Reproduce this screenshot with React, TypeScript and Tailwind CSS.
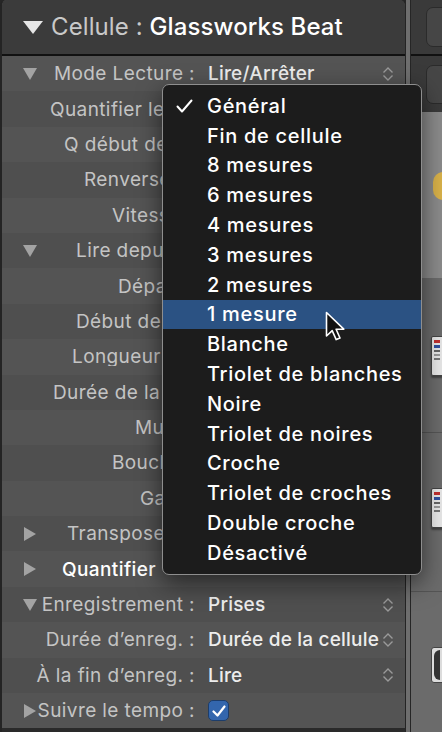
import React from "react";

type Row = {
  label: string;
  tri?: "down" | "right";
  value?: string;
  chev?: boolean;
  check?: boolean;
  pad?: string; // left-aligned label for rows hidden under the menu
  white?: boolean;
};

const rows: Row[] = [
  { label: "Mode Lecture :", tri: "down", value: "Lire/Arrêter", chev: true },
  { label: "Quantifier le début", pad: "pl-[27px]" },
  { label: "Q début de boucle", pad: "pl-[41px]" },
  { label: "Renverser", pad: "pl-[61px]" },
  { label: "Vitesse", pad: "pl-[89px]" },
  { label: "Lire depuis", tri: "down", pad: "pl-[39px]" },
  { label: "Départ", pad: "pl-[95px]" },
  { label: "Début de boucle", pad: "pl-[53px]" },
  { label: "Longueur boucle", pad: "pl-[49px]" },
  { label: "Durée de la cellule", pad: "pl-[30px]" },
  { label: "Muet", pad: "pl-[112px]" },
  { label: "Boucle", pad: "pl-[89px]" },
  { label: "Gain", pad: "pl-[117px]" },
  { label: "Transposer", tri: "right", pad: "pl-[31px]" },
  { label: "Quantifier", tri: "right", pad: "pl-[26px]", white: true },
  { label: "Enregistrement :", tri: "down", value: "Prises", chev: true },
  { label: "Durée d’enreg. :", value: "Durée de la cellule", chev: true },
  { label: "À la fin d’enreg. :", value: "Lire", chev: true },
  { label: "Suivre le tempo :", tri: "right", check: true },
];

const menu = [
  "Général",
  "Fin de cellule",
  "8 mesures",
  "6 mesures",
  "4 mesures",
  "3 mesures",
  "2 mesures",
  "1 mesure",
  "Blanche",
  "Triolet de blanches",
  "Noire",
  "Triolet de noires",
  "Croche",
  "Triolet de croches",
  "Double croche",
  "Désactivé",
];

function Tri({ dir }: { dir: "down" | "right" }) {
  return dir === "down" ? (
    <svg width="14" height="12" viewBox="0 0 14 12" className="shrink-0">
      <path d="M0 0H14L7 12Z" fill="#a3a3a3" />
    </svg>
  ) : (
    <svg width="13" height="14" viewBox="0 0 13 14" className="shrink-0">
      <path d="M1 0L13 7L1 14Z" fill="#a3a3a3" />
    </svg>
  );
}

function Chevron() {
  return (
    <svg width="12" height="16" viewBox="0 0 12 16" className="mr-[11px] shrink-0">
      <path d="M1.5 6.5L6 2L10.5 6.5" fill="none" stroke="#9a9a9a" strokeWidth="1.4" />
      <path d="M1.5 9.5L6 14L10.5 9.5" fill="none" stroke="#9a9a9a" strokeWidth="1.4" />
    </svg>
  );
}

function Thumb() {
  return (
    <div className="flex h-[40px] w-[12px] flex-col gap-[2px] rounded-l-[2px] border border-[#444] bg-[#e8e8e8] px-[2px] py-[3px] shadow-[0_2px_2px_rgba(0,0,0,0.4)]">
      <div className="h-[3px] w-full bg-[#c03030]" />
      <div className="h-[3px] w-full bg-[#3050a0]" />
      <div className="h-[2px] w-full bg-[#666]" />
      <div className="h-[2px] w-full bg-[#999]" />
      <div className="h-[2px] w-full bg-[#777]" />
    </div>
  );
}

export default function App() {
  return (
    <div className="relative flex h-[732px] w-[442px] overflow-hidden bg-[#262626] font-[Inter,sans-serif]">
      {/* Left inspector panel */}
      <div className="flex w-[406px] shrink-0 flex-col overflow-hidden rounded-t-[6px] border-l-2 border-r border-[#242424] bg-[#505050]">
        <div className="flex h-[54px] shrink-0 items-center gap-[8px] bg-[#3b3b3b] pl-[21px]">
          <svg width="20" height="13" viewBox="0 0 20 13">
            <path d="M0 0H20L10 13Z" fill="#e6e6e6" />
          </svg>
          <div className="whitespace-nowrap text-[24px] leading-none tracking-[0.1px]">
            <span className="text-[#c9c9c9]">Cellule : </span>
            <span className="font-medium text-white">Glassworks Beat</span>
          </div>
        </div>
        <div className="h-[2px] shrink-0 bg-[#111]" />
        {rows.map((r, i) => (
          <div
            key={i}
            className={`flex h-[35.4px] shrink-0 items-center ${i % 2 === 0 ? "bg-[#545454]" : "bg-[#4f4f4f]"}`}
          >
            <div
              className={`flex shrink-0 items-center pl-[21px] ${r.pad ? "w-[160px] overflow-hidden" : "w-[193px]"}`}
            >
              {r.tri && <Tri dir={r.tri} />}
              <div
                className={`flex-1 whitespace-nowrap text-[19px] leading-none tracking-[0.4px] ${r.pad ? `min-w-0 overflow-hidden text-left ${r.pad}` : "text-right"} ${r.white ? "font-medium text-white" : "text-[#c4c4c4]"}`}
              >
                {r.label}
              </div>
            </div>
            {!r.pad && (
              <div className="ml-[13px] flex-1 whitespace-nowrap text-[19px] font-medium leading-none tracking-[0.2px] text-[#ededed]">
                {r.value}
                {r.check && (
                  <div className="flex h-[21px] w-[21px] items-center justify-center rounded-[5px] border border-[#1d3d6a] bg-[#3366ad]">
                    <svg width="14" height="12" viewBox="0 0 14 12">
                      <path d="M1.5 6.5L5.5 10.5L12.5 1.5" fill="none" stroke="white" strokeWidth="2.2" strokeLinecap="round" strokeLinejoin="round" />
                    </svg>
                  </div>
                )}
              </div>
            )}
            {r.chev && <Chevron />}
          </div>
        ))}
        <div className="flex-1 bg-[#2a2a2a]" />
      </div>

      {/* Separator */}
      <div className="w-[5px] shrink-0 border-r border-[#262626] bg-[#6e6e6e]" />

      {/* Right panel */}
      <div className="flex flex-1 flex-col">
        <div className="flex h-[54px] shrink-0 items-center bg-[#3a3a3a] pl-[15px]">
          <div className="h-[40px] w-[30px] shrink-0 rounded-[7px] border border-[#2b2b2b] bg-[#464646]" />
        </div>
        <div className="h-[2px] shrink-0 bg-[#111]" />
        <div className="flex h-[56px] shrink-0 items-center bg-[#3a3a3a] pl-[15px]">
          <div className="h-[39px] w-[30px] shrink-0 rounded-[7px] border border-[#2b2b2b] bg-[#464646]" />
        </div>
        <div className="flex h-[166px] shrink-0 items-start bg-[#8b8b8b] pl-[22px] pt-[60px]">
          <div className="h-[28px] w-[10px] rounded-l-full bg-[#d9b24a]" />
        </div>
        <div className="flex h-[155px] shrink-0 items-start border-b border-[#555] bg-[#6b6b6b] pl-[20px] pt-[58px]">
          <Thumb />
        </div>
        <div className="flex h-[159px] shrink-0 items-start border-b border-[#555] bg-[#6b6b6b] pl-[20px] pt-[55px]">
          <Thumb />
        </div>
        <div className="flex flex-1 items-start bg-[#6b6b6b] pl-[20px] pt-[55px]">
          <div className="h-[36px] w-[12px] rounded-l-[3px] border border-[#444] bg-[#dcdcdc] p-[2px]">
            <div className="h-full w-full rounded-l-full bg-[#333]" />
          </div>
        </div>
      </div>

      {/* Popup menu */}
      <div className="absolute left-[162px] top-[84px] flex w-[260px] flex-col rounded-[7px] border border-[#8e8e8e] bg-[#1c1c1c] py-[6px] shadow-[0_8px_24px_rgba(0,0,0,0.55)]">
        {menu.map((m, i) => (
          <div
            key={m}
            className={`relative flex h-[29.8px] items-center pl-[44px] text-[20px] font-medium leading-none tracking-[0.7px] text-white ${i === 7 ? "bg-[#2b5283]" : ""}`}
          >
            {i === 0 && (
              <svg width="17" height="14" viewBox="0 0 17 14" className="absolute left-[13px] top-[8px]">
                <path d="M1.5 7.5L6 12.5L15.5 1.5" fill="none" stroke="white" strokeWidth="2" strokeLinecap="round" strokeLinejoin="round" />
              </svg>
            )}
            {m}
          </div>
        ))}
      </div>

      {/* Mouse cursor */}
      <svg width="24" height="34" viewBox="0 0 24 34" className="absolute left-[325px] top-[311px]">
        <path
          d="M1.5 1.5V25L7.2 19.6L11.2 28.6L15 27L11.1 18.2H18.8Z"
          fill="#111"
          stroke="white"
          strokeWidth="1.6"
          strokeLinejoin="round"
        />
      </svg>
    </div>
  );
}
